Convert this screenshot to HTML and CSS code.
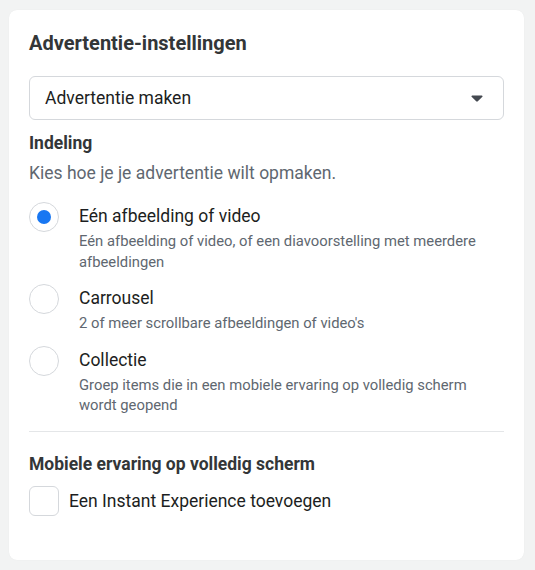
FILE: index.html
```html
<!DOCTYPE html>
<html lang="nl">
<head>
<meta charset="utf-8">
<title>Advertentie-instellingen</title>
<link rel="stylesheet" href="styles.css">
</head>
<body>
<section class="card">
  <h2 class="title">Advertentie-instellingen</h2>
  <div class="select">
    <span class="select-text">Advertentie maken</span>
    <svg class="caret" width="12" height="7" viewBox="0 0 12 7"><path d="M1.2 0.5h9.6a0.8 0.8 0 0 1 0.6 1.3l-4.6 4.5a1.1 1.1 0 0 1-1.6 0L0.6 1.8A0.8 0.8 0 0 1 1.2 0.5z" fill="#444950"/></svg>
  </div>
  <h3 class="heading">Indeling</h3>
  <p class="intro">Kies hoe je je advertentie wilt opmaken.</p>
  <div class="options">
    <div class="option">
      <span class="radio checked"></span>
      <div class="option-body">
        <div class="option-label">Eén afbeelding of video</div>
        <div class="option-desc">Eén afbeelding of video, of een diavoorstelling met meerdere afbeeldingen</div>
      </div>
    </div>
    <div class="option">
      <span class="radio"></span>
      <div class="option-body">
        <div class="option-label">Carrousel</div>
        <div class="option-desc">2 of meer scrollbare afbeeldingen of video's</div>
      </div>
    </div>
    <div class="option">
      <span class="radio"></span>
      <div class="option-body">
        <div class="option-label">Collectie</div>
        <div class="option-desc">Groep items die in een mobiele ervaring op volledig scherm wordt geopend</div>
      </div>
    </div>
  </div>
  <hr class="divider">
  <h3 class="heading heading-2">Mobiele ervaring op volledig scherm</h3>
  <label class="check">
    <span class="box"></span>
    <span class="check-label">Een Instant Experience toevoegen</span>
  </label>
</section>
</body>
</html>
```
FILE: styles.css
```css
* { box-sizing: border-box; }
html, body { margin: 0; padding: 0; }
body {
  background: #f2f3f3;
  font-family: Roboto, "Liberation Sans", Arial, sans-serif;
  color: #1c1e21;
  width: 535px;
  height: 570px;
  overflow: hidden;
}
.card {
  margin: 10px 11px 0 9px;
  height: 550px;
  background: #fff;
  border-radius: 8px;
  padding: 21px 20px 0 20px;
  box-shadow: 0 0 1px rgba(0,0,0,0.08);
}
.title {
  margin: 0;
  font-size: 20px;
  line-height: 24px;
  font-weight: 700;
  color: #333638;
}
.select {
  margin-top: 21px;
  height: 44px;
  border: 1px solid #d5d8dc;
  border-radius: 6px;
  display: flex;
  align-items: center;
  justify-content: space-between;
  padding: 0 20px 0 15px;
}
.select-text {
  font-size: 17.5px;
  color: #1c1e21;
}
.caret { display: block; }
.heading {
  margin: 13px 0 0;
  font-size: 17.5px;
  line-height: 20px;
  font-weight: 700;
  color: #333638;
}
.intro {
  margin: 10px 0 0;
  font-size: 17.5px;
  line-height: 20px;
  color: #606770;
}
.options {
  margin-top: 19px;
  display: flex;
  flex-direction: column;
  gap: 12px;
}
.option {
  display: flex;
  align-items: flex-start;
  gap: 20px;
}
.radio {
  flex: none;
  width: 30px;
  height: 30px;
  border-radius: 50%;
  border: 1px solid #d5d8dc;
  display: flex;
  align-items: center;
  justify-content: center;
}
.radio.checked::after {
  content: "";
  width: 14px;
  height: 14px;
  border-radius: 50%;
  background: #1877f2;
}
.option-body { padding-top: 3px; }
.option-label {
  font-size: 17.5px;
  line-height: 22px;
  color: #1c1e21;
}
.option-desc {
  margin-top: 4px;
  font-size: 14.8px;
  line-height: 20.5px;
  color: #606770;
}
.divider {
  margin: 15px 0 0;
  border: 0;
  border-top: 1px solid #e4e6e8;
  height: 0;
}
.heading-2 { margin-top: 22px; }
.check {
  margin-top: 12px;
  display: flex;
  align-items: center;
  gap: 10px;
}
.box {
  flex: none;
  width: 30px;
  height: 30px;
  border: 1px solid #d5d8dc;
  border-radius: 6px;
}
.check-label {
  font-size: 17.5px;
  color: #1c1e21;
}
```
